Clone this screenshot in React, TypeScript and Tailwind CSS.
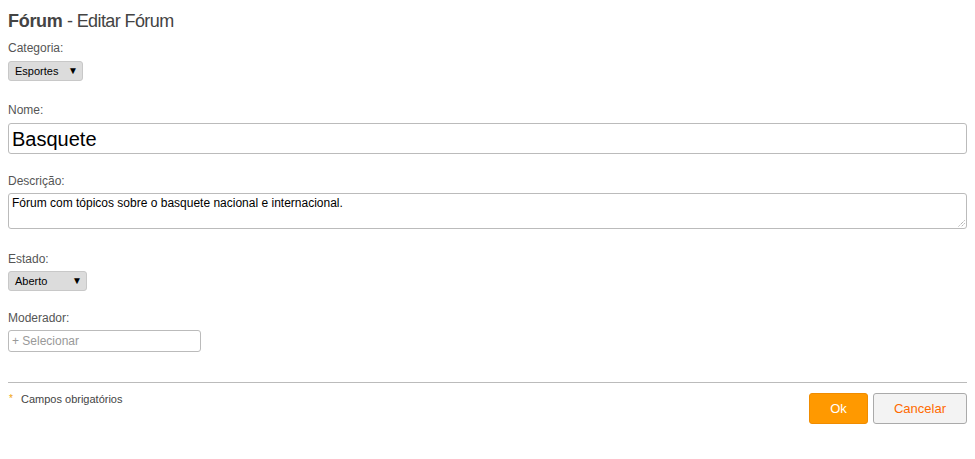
import React from 'react';

const Caret: React.FC = () => (
  <span className="text-[10px] leading-none text-black">▼</span>
);

const App: React.FC = () => {
  return (
    <div className="px-2 pt-[9px] text-[#555] font-['Liberation_Sans',Arial,sans-serif] bg-white min-h-[459px]">
      <h1 className="text-[18px] leading-[24px] text-[#444]">
        <span className="font-bold tracking-[-0.3px]">Fórum</span>
        <span className="tracking-[-0.6px]"> - Editar Fórum</span>
      </h1>

      <div className="mt-[8px] text-[12px] leading-[14px]">Categoria:</div>
      <div className="mt-[6px] flex items-center justify-between w-[75px] h-[20px] pl-[6px] pr-[4px] bg-[#dcdcdc] border border-[#c8c8c8] rounded-[3px] text-[11px] text-black">
        <span>Esportes</span>
        <Caret />
      </div>

      <div className="mt-[22px] text-[12px] leading-[14px]">Nome:</div>
      <div className="mt-[6px] flex items-center h-[31px] px-[3px] border border-[#bbb] rounded-[3px] text-[20px] text-black">
        Basquete
      </div>

      <div className="mt-[20px] text-[12px] leading-[14px]">Descrição:</div>
      <div className="relative mt-[5px] h-[36px] px-[3px] pt-[2px] border border-[#bbb] rounded-[3px] text-[12px] leading-[14px] text-black">
        Fórum com tópicos sobre o basquete nacional e internacional.
        <svg className="absolute right-[1px] bottom-[1px]" width="7" height="7" viewBox="0 0 7 7">
          <line x1="6.5" y1="0.5" x2="0.5" y2="6.5" stroke="#888" strokeWidth="1" strokeDasharray="1 1" />
          <line x1="6.5" y1="3.5" x2="3.5" y2="6.5" stroke="#888" strokeWidth="1" strokeDasharray="1 1" />
        </svg>
      </div>

      <div className="mt-[23px] text-[12px] leading-[14px]">Estado:</div>
      <div className="mt-[5px] flex items-center justify-between w-[79px] h-[20px] pl-[6px] pr-[4px] bg-[#dcdcdc] border border-[#c8c8c8] rounded-[3px] text-[11px] text-black">
        <span>Aberto</span>
        <Caret />
      </div>

      <div className="mt-[20px] text-[12px] leading-[14px]">Moderador:</div>
      <div className="mt-[5px] flex items-center w-[193px] h-[22px] px-[3px] border border-[#bbb] rounded-[3px] text-[12px] text-[#999]">
        + Selecionar
      </div>

      <div className="mt-[30px] border-t border-[#bbb]" />
      <div className="flex justify-between">
        <div className="mt-[10px] flex items-start text-[11px] leading-[13px] text-[#444]">
          <span className="ml-[1px] w-[12px] text-[#f0a30a] text-[10px] leading-[10px] mt-[1px]">*</span>
          <span>Campos obrigatórios</span>
        </div>
        <div className="mt-[10px] flex gap-[5px]">
          <button className="w-[59px] h-[31px] rounded-[3px] bg-[#ff9900] border border-[#f08c00] text-white text-[13px]">
            Ok
          </button>
          <button className="w-[94px] h-[31px] rounded-[3px] bg-[#f3f3f3] border border-[#aaa] text-[#ff6a00] text-[13px]">
            Cancelar
          </button>
        </div>
      </div>
    </div>
  );
};

export default App;
